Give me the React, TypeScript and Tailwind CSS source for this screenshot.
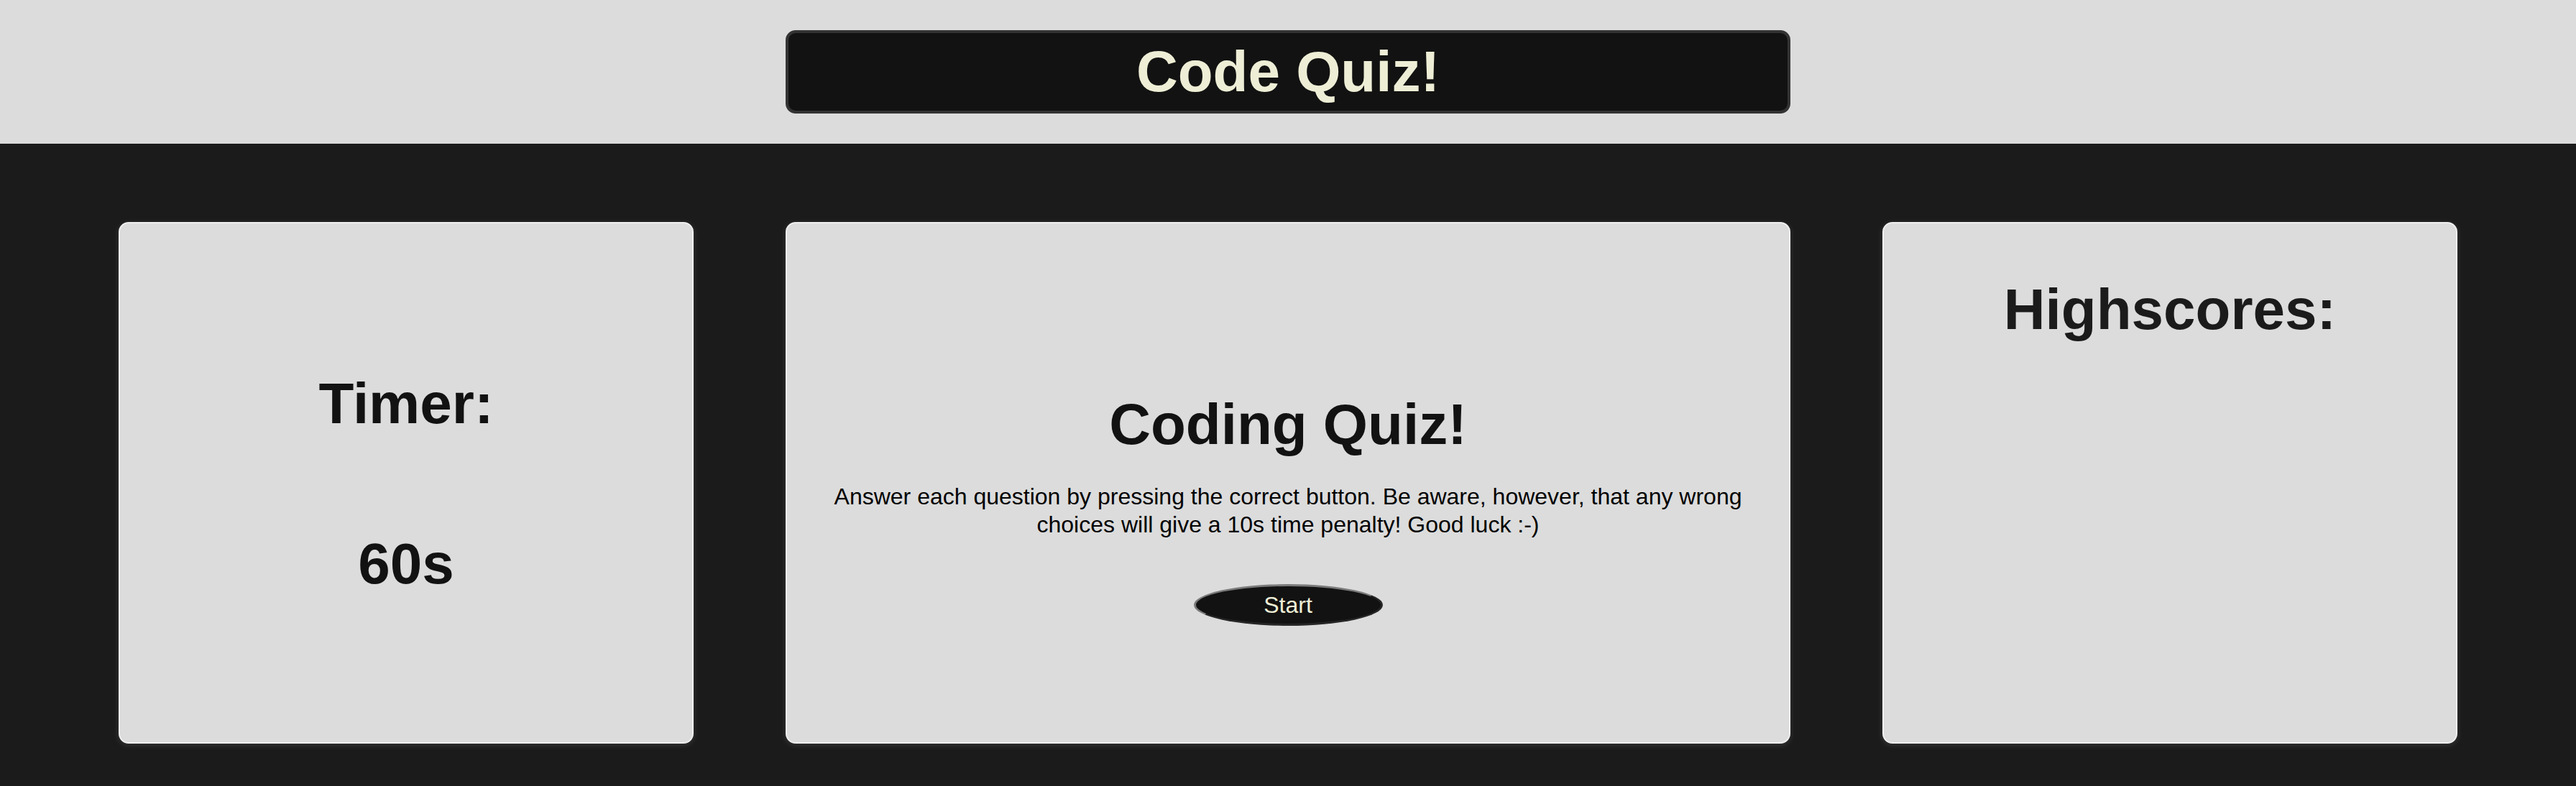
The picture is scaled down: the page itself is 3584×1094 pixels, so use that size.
import React from "react";

export default function App() {
  const font = { fontFamily: '"Liberation Sans", Arial, Helvetica, sans-serif' };
  return (
    <div style={font} className="w-full min-h-[1094px] flex flex-col bg-[#1b1b1b]">
      <header className="h-[200px] bg-[#dcdcdc] flex items-center justify-center">
        <div className="w-[1398px] h-[116px] rounded-[14px] border-4 border-[#333333] bg-[#121212] flex items-center justify-center">
          <h1 className="text-[80px] leading-[92px] font-bold text-[#eeeed6] m-0">Code Quiz!</h1>
        </div>
      </header>
      <main className="flex-1 bg-[#1b1b1b] px-[165px] pt-[109px] pb-[59px] flex gap-[128px]">
        <section className="w-[800px] h-[726px] shrink-0 rounded-[14px] border-2 border-[#efefef] bg-[#dcdcdc] shadow-[0_2px_8px_rgba(255,255,255,0.12)] flex flex-col items-center pt-[205px]">
          <h2 className="text-[80px] leading-[92px] font-bold text-[#121212]">Timer:</h2>
          <p className="mt-[131px] text-[80px] leading-[92px] font-bold text-[#121212]">60s</p>
        </section>
        <section className="w-[1398px] h-[726px] shrink-0 rounded-[14px] border-2 border-[#efefef] bg-[#dcdcdc] shadow-[0_2px_8px_rgba(255,255,255,0.12)] flex flex-col items-center pt-[234px] px-[48px]">
          <h2 className="text-[80px] leading-[92px] font-bold text-[#121212]">Coding Quiz!</h2>
          <p className="mt-[35px] text-[32px] leading-[39.3px] text-black text-center">
            Answer each question by pressing the correct button. Be aware, however, that any wrong choices will give a 10s time penalty! Good luck :-)
          </p>
          <button className="mt-[62px] w-[263px] h-[58px] rounded-[50%] border-[3px] border-t-[#7a7a7a] border-l-[#7a7a7a] border-b-[#262626] border-r-[#262626] bg-[#121212] text-[32px] leading-none text-[#eeeed6] flex items-center justify-center">
            Start
          </button>
        </section>
        <section className="w-[800px] h-[726px] shrink-0 rounded-[14px] border-2 border-[#efefef] bg-[#dcdcdc] shadow-[0_2px_8px_rgba(255,255,255,0.12)] flex flex-col items-center pt-[74px]">
          <h2 className="text-[80px] leading-[92px] font-bold text-[#1b1b1b]">Highscores:</h2>
        </section>
      </main>
    </div>
  );
}
